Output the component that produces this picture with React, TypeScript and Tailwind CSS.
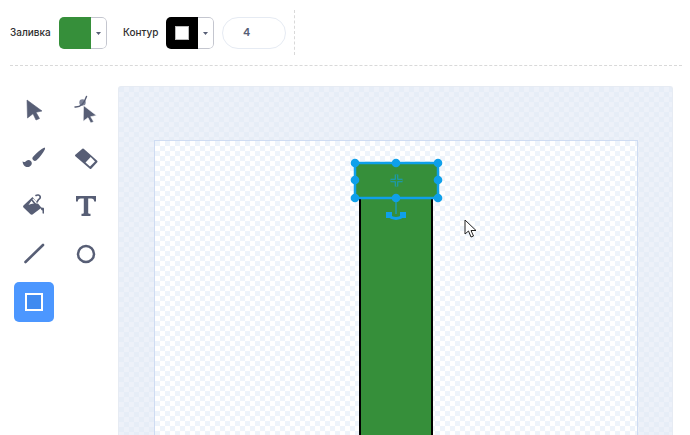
import React from 'react';

const ICON = '#575e75';

const Swatch: React.FC<{ children?: React.ReactNode; fill: string }> = ({ children, fill }) => (
    <div className="flex h-8 w-12 overflow-hidden rounded-[5px]">
        <div className={`flex w-8 shrink-0 items-center justify-center ${fill}`}>{children}</div>
        <div className="flex flex-1 items-center justify-center rounded-r-[5px] border border-l-0 border-[#c4c6cf] bg-white">
            <svg width="5" height="3" viewBox="0 0 5 3"><path d="M0 0h5L2.500 3z" fill={ICON} /></svg>
        </div>
    </div>
);

const Tool: React.FC<{ children?: React.ReactNode; active?: boolean }> = ({ children, active }) => (
    <div className={`flex h-10 w-10 items-center justify-center rounded-[5px] ${active ? 'bg-[#4c97ff]' : ''}`}>
        <svg className="overflow-visible" width="24" height="24" viewBox="0 0 24 24">{children}</svg>
    </div>
);

const tools = [
    <path key="select" d="M5 2l15 11-6 1.300 3.500 6.200-3.500 1.500-3-6.300L5.500 20z" fill={ICON} stroke={ICON} strokeLinejoin="round" strokeWidth=".6" />,
    <g key="reshape">
        <circle cx="8.500" cy="4.500" r="3.200" fill="#7d8398" />
        <path d="M1 9c3 .2 5-.5 7-2.500S11 3 12.500-1.500" stroke={ICON} strokeWidth="1.400" fill="none" strokeLinecap="round" />
        <path d="M9.500 7.500l13 10-5.800 1.200 3 5-3 1.300-2.700-5.300-4.800 3.500z" fill={ICON} stroke="#fff" strokeWidth=".6" />
    </g>,
    <g key="brush">
        <path d="M22.500 1.500c.7.400.7 1.300.3 2-1.500 3-4.500 7.500-8.500 11-1 .8-2.200.6-3.200-.4-.9-.9-1-2.100-.2-3C14.500 6.500 19 3.300 22.500 1.500z" fill={ICON} />
        <path d="M.5 15.500c1.700 1 2.800.2 4-.8 1.300-1 3-1 4.300.2 1.300 1.300 1.300 3 .3 4.300-1.300 1.700-3.500 2.200-5.300 1.600-1.800-.6-2.800-2.600-3.300-5.300z" fill={ICON} />
    </g>,
    <g key="eraser">
        <path d="M2 9.500L9 3.500l13.500 12-6 6.500z" fill={ICON} stroke={ICON} strokeWidth="2" strokeLinejoin="round" />
        <path d="M11.500 16.500l5.200-5.500 4.300 4.500-5 5z" fill="#fff" />
    </g>,
    <g key="fill">
        <path d="M10.500 3L1.500 11.500c-.6.600-.6 1.400 0 2l7 6.800c.6.500 1.300.6 2 .2l9-6.800z" fill={ICON} />
        <path d="M6.500 11c3-1.500 6.500-1.800 10-1.500L11 4.500z" fill="#fff" />
        <path d="M9.500 5.500l4.500 5.500M14 1.500c1.400-1 3.300-.6 4 .6.600 1.200 0 2.600-1.500 3.500L15 8" stroke={ICON} strokeWidth="1.600" fill="none" strokeLinecap="round" />
        <path d="M18.500 13.500l2.700.3c.5 0 .8.500.8 1v4.200c0 1-1.500 1-1.500 0v-2.500c-1 0-1.700-1.300-2-3z" fill={ICON} />
    </g>,
    <path key="text" d="M2 3h20v5.500h-1.800c-.3-2-1-2.900-3-2.900h-3v14.200c0 .8.400 1 2.300 1V23H7.500v-2.200c1.900 0 2.300-.2 2.300-1V5.600H6.800c-2 0-2.700.9-3 2.900H2z" fill={ICON} transform="translate(0 -1)" />,
    <path key="line" d="M3.500 20L21 3" stroke={ICON} strokeWidth="2.600" strokeLinecap="round" />,
    <circle key="oval" cx="12" cy="12" r="8" fill="none" stroke={ICON} strokeWidth="2.500" />,
];

const handles = [
    [7, 6], [48, 6], [90, 6],
    [7, 23], [90, 23],
    [7, 41], [48, 41], [90, 41],
];

const App: React.FC = () => {
    return (
        <div className="flex h-[435px] w-[690px] flex-col overflow-hidden bg-white font-['Inter',sans-serif] text-[#575e75]">
            <header className="ml-2.5 mr-2 flex h-[66px] shrink-0 border-b border-dashed border-[#d9d9d9]">
                <div className="flex h-[56px] items-center pt-[10px]">
                    <span className="mb-0.5 w-[49px] text-[10px] font-medium text-[#2f2f2f]">Заливка</span>
                    <Swatch fill="bg-[#368f3a]" />
                    <span className="mb-0.5 ml-4 w-[43px] text-[10px] font-medium text-[#2f2f2f]">Контур</span>
                    <Swatch fill="bg-black">
                        <div className="h-[14px] w-[14px] border border-[#bbb] bg-white" />
                    </Swatch>
                    <div className="ml-2 flex h-8 w-16 items-center rounded-full border border-[#e6ebf3] pb-0.5 pl-5 text-[11px] font-semibold">4</div>
                </div>
                <div className="ml-2 mt-[10px] h-[45px] border-l border-dashed border-[#d9d9d9]" />
            </header>
            <main className="flex min-h-0 flex-1">
                <aside className="ml-3.5 mt-6 grid h-fit w-[92px] shrink-0 grid-cols-[40px_40px] gap-x-3 gap-y-2">
                    {tools.map(t => <Tool key={t.key}>{t}</Tool>)}
                    <Tool active>
                        <rect x="4" y="4" width="16" height="16" fill="#3f8af0" stroke="#fff" strokeWidth="2" />
                    </Tool>
                </aside>
                <section className="ml-3 mr-[17px] mt-5 flex-1 rounded-t-[3px] border border-b-0 border-[#e6ebf3] bg-[#e8eef8] bg-[conic-gradient(#edf1f9_25%,#e6edf7_0_50%,#edf1f9_0_75%,#e6edf7_0)] bg-[length:10px_10px] pl-[35px] pr-[34px] pt-[53px]">
                    <div className="relative h-full border border-b-0 border-[#cfdcf2] bg-white bg-[conic-gradient(#ffffff_25%,#eef4fb_0_50%,#ffffff_0_75%,#eef4fb_0)] bg-[length:10px_10px]">
                        <div className="absolute bottom-0 left-[204px] top-[56px] w-[74px] border-x-2 border-black bg-[#368f3a]" />
                        <svg className="absolute left-[193px] top-[16px]" width="100" height="75" viewBox="0 0 100 75">
                            <rect x="7" y="6" width="83" height="35" fill="#368f3a" stroke="#0fa0ea" strokeWidth="2.500" />
                            <path d="M48 42v15" stroke="#0fa0ea" strokeWidth="1" />
                            <path d="M48.500 17.500v12M42.500 23.500h12" stroke="#0fa0ea" strokeWidth="3.500" opacity=".8" />
                            <path d="M48.500 17.500v12M42.500 23.500h12" stroke="#368f3a" strokeWidth="1.500" />
                            <rect x="38" y="55" width="6" height="6" fill="#0fa0ea" />
                            <rect x="52" y="55" width="6" height="6" fill="#0fa0ea" />
                            <path d="M41 59q7 5 14 0" stroke="#0fa0ea" strokeWidth="3" fill="none" />
                            {handles.map(([x, y]) => <circle key={`${x}-${y}`} cx={x} cy={y} r="4.300" fill="#0fa0ea" />)}
                        </svg>
                        <svg className="absolute left-[309px] top-[78px]" width="14" height="20" viewBox="0 0 14 20">
                            <path d="M1 1v14l3.500-3 2.500 6 2.500-1-2.500-5.500h5z" fill="#fff" stroke="#222" strokeWidth="1" strokeLinejoin="round" />
                        </svg>
                    </div>
                </section>
            </main>
        </div>
    );
};

export default App;
